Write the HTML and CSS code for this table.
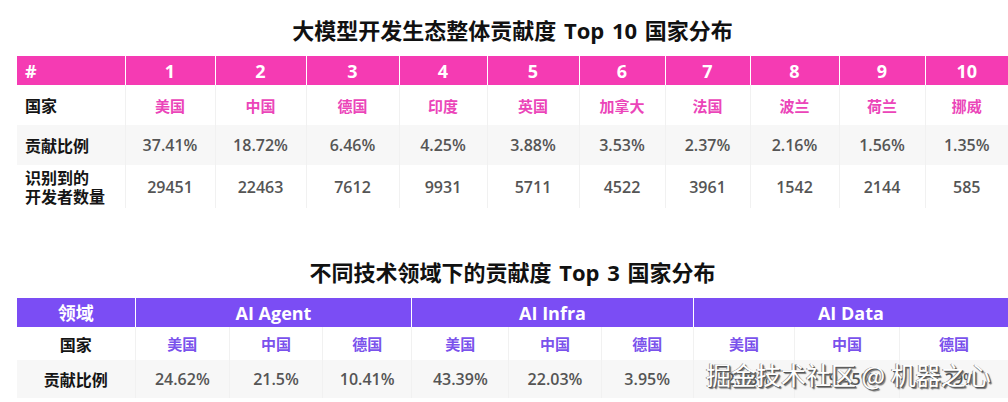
FILE: index.html
```html
<!DOCTYPE html>
<html lang="zh">
<head>
<meta charset="utf-8">
<title>贡献度 国家分布</title>
<link rel="stylesheet" href="styles.css">
</head>
<body>
<div class="page">
  <h2 class="title t1">大模型开发生态整体贡献度 Top 10 国家分布</h2>
  <table class="tbl pink">
    <colgroup>
      <col style="width:108px"><col style="width:90px"><col style="width:91px"><col style="width:93px"><col style="width:88px"><col style="width:92px"><col style="width:86px"><col style="width:85px"><col style="width:89px"><col style="width:86px"><col style="width:83px">
    </colgroup>
    <thead>
      <tr class="hd"><th class="lab">#</th><th>1</th><th>2</th><th>3</th><th>4</th><th>5</th><th>6</th><th>7</th><th>8</th><th>9</th><th>10</th></tr>
    </thead>
    <tbody>
      <tr class="r1"><td class="lab">国家</td><td class="cn">美国</td><td class="cn">中国</td><td class="cn">德国</td><td class="cn">印度</td><td class="cn">英国</td><td class="cn">加拿大</td><td class="cn">法国</td><td class="cn">波兰</td><td class="cn">荷兰</td><td class="cn">挪威</td></tr>
      <tr class="r2 gray"><td class="lab">贡献比例</td><td class="num">37.41%</td><td class="num">18.72%</td><td class="num">6.46%</td><td class="num">4.25%</td><td class="num">3.88%</td><td class="num">3.53%</td><td class="num">2.37%</td><td class="num">2.16%</td><td class="num">1.56%</td><td class="num">1.35%</td></tr>
      <tr class="r3"><td class="lab two">识别到的<br>开发者数量</td><td class="num">29451</td><td class="num">22463</td><td class="num">7612</td><td class="num">9931</td><td class="num">5711</td><td class="num">4522</td><td class="num">3961</td><td class="num">1542</td><td class="num">2144</td><td class="num">585</td></tr>
    </tbody>
  </table>

  <h2 class="title t2">不同技术领域下的贡献度 Top 3 国家分布</h2>
  <table class="tbl purple">
    <colgroup>
      <col style="width:118px"><col style="width:94px"><col style="width:93px"><col style="width:89px"><col style="width:97px"><col style="width:92px"><col style="width:92px"><col style="width:101px"><col style="width:105px"><col style="width:108px">
    </colgroup>
    <thead>
      <tr class="hd"><th>领域</th><th colspan="3">AI Agent</th><th colspan="3">AI Infra</th><th colspan="3">AI Data</th></tr>
    </thead>
    <tbody>
      <tr class="p1"><td class="lab c">国家</td><td class="cn">美国</td><td class="cn">中国</td><td class="cn">德国</td><td class="cn">美国</td><td class="cn">中国</td><td class="cn">德国</td><td class="cn">美国</td><td class="cn">中国</td><td class="cn">德国</td></tr>
      <tr class="p2 gray"><td class="lab c">贡献比例</td><td class="num">24.62%</td><td class="num">21.5%</td><td class="num">10.41%</td><td class="num">43.39%</td><td class="num">22.03%</td><td class="num">3.95%</td><td class="num">32.88%</td><td class="num">19.45%</td><td class="num">7.29%</td></tr>
    </tbody>
  </table>
</div>
<div class="watermark">掘金技术社区 @ 机器之心</div>
</body>
</html>
```

FILE: styles.css
```css
html, body {
  margin: 0;
  padding: 0;
  background: #ffffff;
}
body {
  font-family: "Noto Sans CJK SC", "Noto Sans", sans-serif;
  position: relative;
  width: 1008px;
  height: 402px;
  overflow: hidden;
}
.page {
  margin-left: 17px;
  width: 991px;
  padding-top: 14px;
}
.title {
  margin: 0;
  height: 32px;
  line-height: 32px;
  font-size: 22px;
  font-weight: 700;
  color: #111;
  text-align: center;
  word-spacing: 2px;
  font-family: "Open Sans", "Noto Sans CJK SC", sans-serif;
}
.t1 { margin-bottom: 10px; }
.t2 { margin-top: 48px; margin-bottom: 10px; }
.tbl {
  border-collapse: collapse;
  table-layout: fixed;
  width: 100%;
}
.tbl th, .tbl td {
  padding: 0;
  text-align: center;
  vertical-align: middle;
  overflow: hidden;
  white-space: nowrap;
}
.tbl th {
  color: #ffffff;
  font-family: "Open Sans", "Noto Sans CJK SC", sans-serif;
  font-weight: 700;
  font-size: 18px;
  height: 29px;
  line-height: 20px;
  border-left: 1px solid rgba(255,255,255,0.55);
}
.tbl th:first-child { border-left: none; }
.pink th { background: #f53bb3; }
.purple th { background: #7b4df4; }
.tbl td {
  border-left: 1px solid #f1f1f1;
  font-weight: 700;
}
.tbl td:first-child { border-left: none; }
.lab {
  text-align: left !important;
  padding-left: 8px !important;
  color: #151515;
  font-size: 16px;
  font-family: "Noto Sans CJK SC", sans-serif;
  font-weight: 700;
}
.lab.c { text-align: center !important; padding-left: 0 !important; }
.tbl th.lab { font-size: 18px; }
.cn {
  font-size: 15px;
  font-family: "Noto Sans CJK SC", sans-serif;
}
.pink .cn { color: #eb45b9; }
.purple .cn { color: #7a52ec; }
.num {
  font-family: "Open Sans", sans-serif;
  font-size: 16px;
  font-weight: 600 !important;
  color: #555555;
}
.gray td { background: #f7f7f7; }
.r1 td { height: 40px; }
.r2 td { height: 40px; }
.r3 td { height: 43px; }
.two { line-height: 19px; white-space: normal !important; }
.p1 td { height: 33px; }
.p2 td { height: 38px; }
.watermark {
  position: absolute;
  left: 706px;
  top: 358px;
  font-family: "Noto Sans CJK SC", sans-serif;
  font-size: 25px;
  font-weight: 400;
  line-height: 32px;
  color: #ffffff;
  white-space: nowrap;
  text-shadow: 1px 1px 0 #555, 2px 2px 1px #777, -1px 0 0 #999;
}
```
